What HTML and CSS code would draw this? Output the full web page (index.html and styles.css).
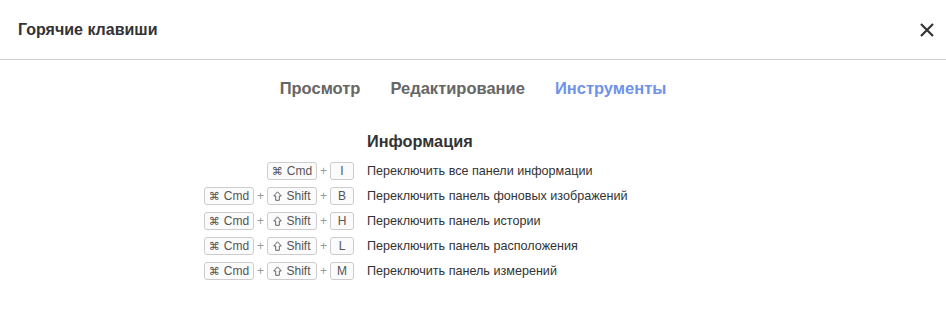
FILE: index.html
```html
<!DOCTYPE html>
<html lang="ru">
<head>
  <meta charset="UTF-8">
  <meta name="viewport" content="width=device-width, initial-scale=1.0">
  <title>Горячие клавиши</title>
  <link rel="stylesheet" href="styles.css">
</head>
<body>

<div class="dialog">
  <div class="dialog-header">
    <h1 class="dialog-title">Горячие клавиши</h1>
    <button class="close-btn" aria-label="Закрыть">
      <svg width="14" height="14" viewBox="0 0 14 14">
        <path d="M1 1 L13 13 M13 1 L1 13" stroke="#333" stroke-width="2.2" fill="none"/>
      </svg>
    </button>
  </div>

  <div class="tabs">
    <span class="tab">Просмотр</span>
    <span class="tab">Редактирование</span>
    <span class="tab active">Инструменты</span>
  </div>

  <div class="shortcuts">
    <div></div>
    <h2 class="section-title">Информация</h2>

    <div class="keys"><kbd class="mod"><span class="sym">⌘</span>Cmd</kbd><span class="plus">+</span><kbd class="letter">I</kbd></div>
    <div class="desc">Переключить все панели информации</div>

    <div class="keys"><kbd class="mod"><span class="sym">⌘</span>Cmd</kbd><span class="plus">+</span><kbd class="mod"><svg class="shift-icon" width="9" height="10" viewBox="0 0 9 10"><path d="M4.5 0.8 L8.3 5 H6.3 V9.3 H2.7 V5 H0.7 Z" stroke="#555" stroke-width="0.9" fill="none" stroke-linejoin="round"/></svg>Shift</kbd><span class="plus">+</span><kbd class="letter">B</kbd></div>
    <div class="desc">Переключить панель фоновых изображений</div>

    <div class="keys"><kbd class="mod"><span class="sym">⌘</span>Cmd</kbd><span class="plus">+</span><kbd class="mod"><svg class="shift-icon" width="9" height="10" viewBox="0 0 9 10"><path d="M4.5 0.8 L8.3 5 H6.3 V9.3 H2.7 V5 H0.7 Z" stroke="#555" stroke-width="0.9" fill="none" stroke-linejoin="round"/></svg>Shift</kbd><span class="plus">+</span><kbd class="letter">H</kbd></div>
    <div class="desc">Переключить панель истории</div>

    <div class="keys"><kbd class="mod"><span class="sym">⌘</span>Cmd</kbd><span class="plus">+</span><kbd class="mod"><svg class="shift-icon" width="9" height="10" viewBox="0 0 9 10"><path d="M4.5 0.8 L8.3 5 H6.3 V9.3 H2.7 V5 H0.7 Z" stroke="#555" stroke-width="0.9" fill="none" stroke-linejoin="round"/></svg>Shift</kbd><span class="plus">+</span><kbd class="letter">L</kbd></div>
    <div class="desc">Переключить панель расположения</div>

    <div class="keys"><kbd class="mod"><span class="sym">⌘</span>Cmd</kbd><span class="plus">+</span><kbd class="mod"><svg class="shift-icon" width="9" height="10" viewBox="0 0 9 10"><path d="M4.5 0.8 L8.3 5 H6.3 V9.3 H2.7 V5 H0.7 Z" stroke="#555" stroke-width="0.9" fill="none" stroke-linejoin="round"/></svg>Shift</kbd><span class="plus">+</span><kbd class="letter">M</kbd></div>
    <div class="desc">Переключить панель измерений</div>
  </div>
</div>

</body>
</html>
```

FILE: styles.css
```css
body {
  margin: 0;
  font-family: 'Liberation Sans', Arial, sans-serif;
  background-color: #fff;
  color: #333;
}

.dialog-header {
  display: flex;
  align-items: center;
  justify-content: space-between;
  height: 59px;
  padding: 0 12px 0 18px;
  border-bottom: 1px solid #ccc;
}

.dialog-title {
  margin: 0;
  font-size: 16px;
  font-weight: bold;
  color: #333;
}

.close-btn {
  display: flex;
  padding: 0;
  border: none;
  background: none;
  cursor: pointer;
}

.tabs {
  display: flex;
  justify-content: center;
  gap: 30px;
  margin-top: 18px;
  line-height: 20px;
}

.tab {
  font-size: 16.5px;
  font-weight: bold;
  color: #666;
  cursor: pointer;
}

.tab.active {
  color: #6f93ea;
}

.shortcuts {
  display: grid;
  grid-template-columns: 354px auto;
  column-gap: 13px;
  row-gap: 7px;
  margin-top: 33px;
  align-items: center;
}

.section-title {
  margin: 0 0 4px;
  font-size: 16.3px;
  line-height: 20px;
  font-weight: bold;
  color: #333;
}

.keys {
  display: flex;
  justify-content: flex-end;
  align-items: center;
}

kbd {
  display: inline-flex;
  align-items: center;
  justify-content: center;
  box-sizing: border-box;
  height: 18px;
  font-family: 'Liberation Sans', Arial, sans-serif;
  font-size: 12px;
  color: #555;
  background-color: #fbfbfb;
  border: 1px solid #ccc;
  border-radius: 3px;
}

kbd.mod {
  width: 50px;
}

kbd.letter {
  width: 24px;
}

.sym {
  margin-right: 4px;
  font-family: 'DejaVu Sans', sans-serif;
  font-size: 11px;
}

.shift-icon {
  margin-right: 4px;
}

.plus {
  margin: 0 3px;
  font-size: 12px;
  color: #999;
}

.desc {
  font-size: 12.6px;
  color: #333;
}
```
